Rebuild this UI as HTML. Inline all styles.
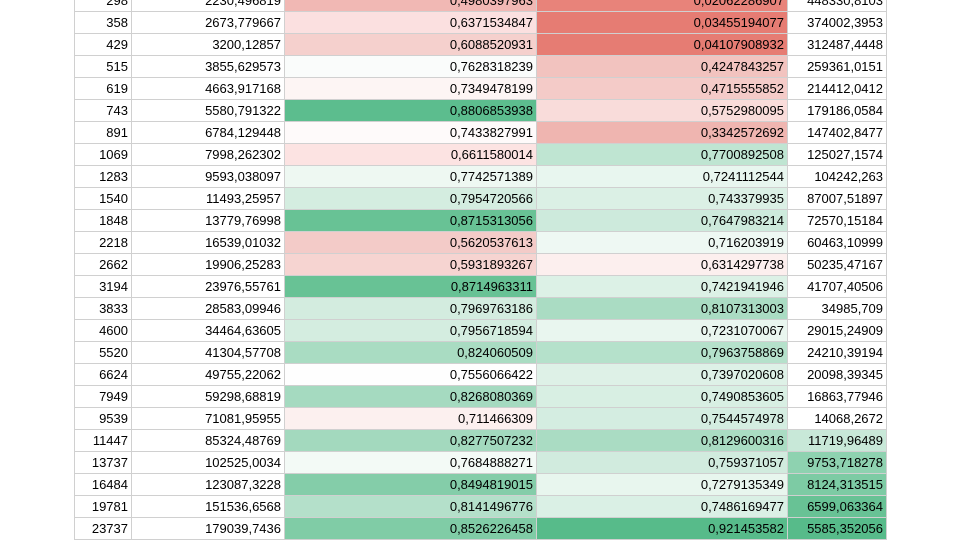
<!DOCTYPE html><html><head><style>
body{margin:0;background:#fff;width:960px;height:540px;overflow:hidden;position:relative;font-family:"Liberation Sans",Arial,sans-serif;font-size:13px}
table{position:absolute;left:74px;top:-11px;border-collapse:collapse;table-layout:fixed}
td{border:1px solid #d0d0d0;height:21px;padding:0 3px;text-align:right;white-space:nowrap;overflow:hidden;color:#000;line-height:21px}
</style></head><body><table>
<colgroup><col style="width:57px"><col style="width:153px"><col style="width:252px"><col style="width:251px"><col style="width:99px"></colgroup>
<tr><td>298</td><td>2230,496819</td><td style="background:#f1b8b4">0,4980397963</td><td style="background:#e8837a">0,02062286907</td><td>448330,8103</td></tr>
<tr><td>358</td><td>2673,779667</td><td style="background:#fbe0e0">0,6371534847</td><td style="background:#e67c73">0,03455194077</td><td>374002,3953</td></tr>
<tr><td>429</td><td>3200,12857</td><td style="background:#f5d0cd">0,6088520931</td><td style="background:#e67c73">0,04107908932</td><td>312487,4448</td></tr>
<tr><td>515</td><td>3855,629573</td><td style="background:#fafcfb">0,7628318239</td><td style="background:#f2c3bf">0,4247843257</td><td>259361,0151</td></tr>
<tr><td>619</td><td>4663,917168</td><td style="background:#fdf5f4">0,7349478199</td><td style="background:#f4cbc8">0,4715555852</td><td>214412,0412</td></tr>
<tr><td>743</td><td>5580,791322</td><td style="background:#5cbd8e">0,8806853938</td><td style="background:#f9dcda">0,5752980095</td><td>179186,0584</td></tr>
<tr><td>891</td><td>6784,129448</td><td style="background:#fefafa">0,7433827991</td><td style="background:#efb5b0">0,3342572692</td><td>147402,8477</td></tr>
<tr><td>1069</td><td>7998,262302</td><td style="background:#fce3e2">0,6611580014</td><td style="background:#bfe5d2">0,7700892508</td><td>125027,1574</td></tr>
<tr><td>1283</td><td>9593,038097</td><td style="background:#eef8f2">0,7742571389</td><td style="background:#e8f6ef">0,7241112544</td><td>104242,263</td></tr>
<tr><td>1540</td><td>11493,25957</td><td style="background:#d4ede0">0,7954720566</td><td style="background:#dbf0e5">0,743379935</td><td>87007,51897</td></tr>
<tr><td>1848</td><td>13779,76998</td><td style="background:#68c295">0,8715313056</td><td style="background:#cdeadc">0,7647983214</td><td>72570,15184</td></tr>
<tr><td>2218</td><td>16539,01032</td><td style="background:#f3cbc8">0,5620537613</td><td style="background:#eef8f3">0,716203919</td><td>60463,10999</td></tr>
<tr><td>2662</td><td>19906,25283</td><td style="background:#f6d4d1">0,5931893267</td><td style="background:#fcefee">0,6314297738</td><td>50235,47167</td></tr>
<tr><td>3194</td><td>23976,55761</td><td style="background:#68c295">0,8714963311</td><td style="background:#dcf1e6">0,7421941946</td><td>41707,40506</td></tr>
<tr><td>3833</td><td>28583,09946</td><td style="background:#d3ecdf">0,7969763186</td><td style="background:#aadcc3">0,8107313003</td><td>34985,709</td></tr>
<tr><td>4600</td><td>34464,63605</td><td style="background:#d4ede0">0,7956718594</td><td style="background:#e9f6ef">0,7231070067</td><td>29015,24909</td></tr>
<tr><td>5520</td><td>41304,57708</td><td style="background:#a9dcc2">0,824060509</td><td style="background:#b5e1cb">0,7963758869</td><td>24210,39194</td></tr>
<tr><td>6624</td><td>49755,22062</td><td style="background:#fefefe">0,7556066422</td><td style="background:#def1e7">0,7397020608</td><td>20098,39345</td></tr>
<tr><td>7949</td><td>59298,68819</td><td style="background:#a5dac0">0,8268080369</td><td style="background:#d8efe3">0,7490853605</td><td>16863,77946</td></tr>
<tr><td>9539</td><td>71081,95955</td><td style="background:#fcf0ef">0,711466309</td><td style="background:#d4ede1">0,7544574978</td><td>14068,2672</td></tr>
<tr><td>11447</td><td>85324,48769</td><td style="background:#a3d9be">0,8277507232</td><td style="background:#aadcc3">0,8129600316</td><td style="background:#c8e8d8">11719,96489</td></tr>
<tr><td>13737</td><td>102525,0034</td><td style="background:#f3faf6">0,7684888271</td><td style="background:#d1ebde">0,759371057</td><td style="background:#8ed2b0">9753,718278</td></tr>
<tr><td>16484</td><td>123087,3228</td><td style="background:#84cda9">0,8494819015</td><td style="background:#e8f6ee">0,7279135349</td><td style="background:#7dcba4">8124,313515</td></tr>
<tr><td>19781</td><td>151536,6568</td><td style="background:#b4e0ca">0,8141496776</td><td style="background:#daf0e5">0,7486169477</td><td style="background:#68c295">6599,063364</td></tr>
<tr><td>23737</td><td>179039,7436</td><td style="background:#80cca6">0,8526226458</td><td style="background:#57bb8a">0,921453582</td><td style="background:#57bb8a">5585,352056</td></tr>
</table></body></html>
